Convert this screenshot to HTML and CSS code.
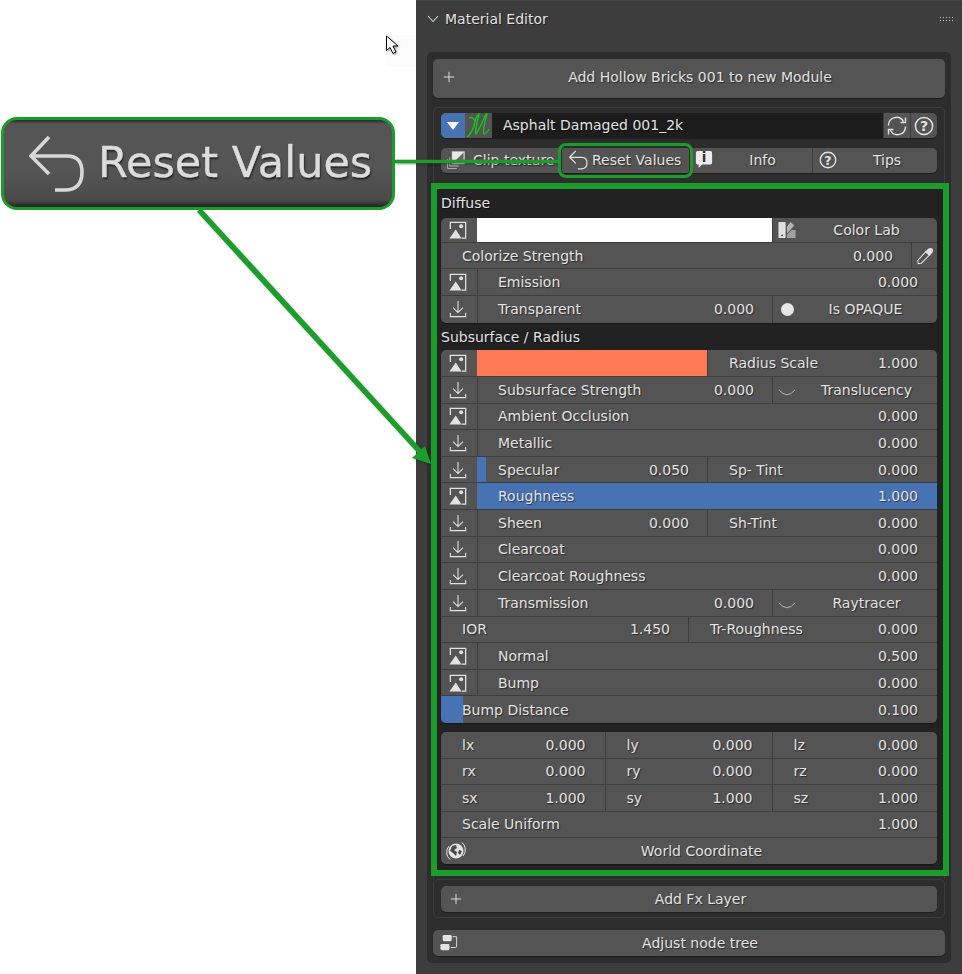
FILE: index.html
```html
<!DOCTYPE html>
<html lang="en">
<head>
    <meta charset="UTF-8">
    <meta name="viewport" content="width=device-width, initial-scale=1.0">
    <title>Material Editor</title>
    <link rel="stylesheet" href="styles.css">
</head>
<body>
    <svg class="defs" width="0" height="0">
        <symbol id="i-image" viewBox="0 0 20 20">
            <path d="M1.5 9V1.5H18.5V19H14" fill="none" stroke="currentColor" stroke-width="1.4"/>
            <path d="M0.5 19.5L7.5 9.5L14 19.5Z" fill="currentColor"/>
            <circle cx="13.5" cy="5.8" r="2.2" fill="currentColor"/>
        </symbol>
        <symbol id="i-import" viewBox="0 0 20 20">
            <path d="M10 1V14M4.5 8.5L10 14L15.5 8.5M1.5 14.5V18.5H18.5V14.5" fill="none" stroke="currentColor" stroke-width="1.2"/>
        </symbol>
        <symbol id="i-plus" viewBox="0 0 14 14">
            <path d="M7 1V13M1 7H13" fill="none" stroke="currentColor" stroke-width="1.1"/>
        </symbol>
        <symbol id="i-refresh" viewBox="0 0 20 20">
            <path d="M1.5 9.5A8 8 0 0 1 16.5 5.5M18.5 1.5V6.5H13.5M18.5 10.5A8 8 0 0 1 3.5 14.5M1.5 18.5V13.5H6.5" fill="none" stroke="currentColor" stroke-width="1.4"/>
        </symbol>
        <symbol id="i-clip" viewBox="0 0 20 20">
            <path d="M0.5 9V18Q0.5 19.5 2 19.5H11M3 7V16.5H13" fill="none" stroke="#a8a8a8" stroke-width="1.2"/>
            <rect x="6" y="1" width="13" height="13" fill="none" stroke="#d8d8d8" stroke-width="1.3"/>
            <path d="M6 14L19 1V14Z" fill="#d8d8d8" opacity="0.15"/>
            <path d="M6 1H19L6 14Z" fill="#e8e8e8"/>
        </symbol>
        <symbol id="i-swatch" viewBox="0 0 20 20">
            <rect x="0.5" y="1" width="8" height="18" rx="1" fill="#e0e0e0"/>
            <circle cx="4.5" cy="16" r="1" fill="#444"/>
            <path d="M10 6L14 1L18 5L10 14Z" fill="#b4b4b4"/>
            <path d="M10 19V15L15 10H19.5V19Z" fill="#a0a0a0"/>
        </symbol>
        <symbol id="i-dropper" viewBox="0 0 20 20">
            <path d="M11 5L15 9L6 18L2.5 18.5L2 15Z" fill="none" stroke="currentColor" stroke-width="1.2"/>
            <path d="M10 5.5L13.5 2Q16 0 18.5 2Q20 4 18 6.5L15 10Z" fill="currentColor"/>
        </symbol>
        <symbol id="i-curve" viewBox="0 0 20 10">
            <path d="M1 2Q10 13 19 2" fill="none" stroke="#b4b4b4" stroke-width="1.1"/>
        </symbol>
        <symbol id="i-globe" viewBox="0 0 20 20">
            <circle cx="10" cy="10" r="7.5" fill="#e4e4e4"/>
            <path d="M6 5L10 4L11 7L8 9L11 11L10 15L7 12L4 10Z" fill="#4a4a4a"/>
            <path d="M13 9L16 10L14 14L12 12Z" fill="#4a4a4a"/>
            <path d="M16 1.5A9.5 9.5 0 0 1 17 15M4 18.5A9.5 9.5 0 0 1 3 5" fill="none" stroke="#e4e4e4" stroke-width="1"/>
        </symbol>
        <symbol id="i-nodes" viewBox="0 0 20 20">
            <rect x="3" y="1" width="10" height="7" rx="1.5" fill="#e4e4e4"/>
            <rect x="0.5" y="11" width="10" height="7" rx="1.5" fill="#e4e4e4"/>
            <path d="M14 3H18.5V13.5Q18.5 15 17 15H12" fill="none" stroke="#e4e4e4" stroke-width="1"/>
        </symbol>
        <symbol id="i-undo" viewBox="0 0 56 58">
            <path d="M3 21H38Q53 21 53 37Q53 55 36 55H26M20 2L2 21L20 39" fill="none" stroke="currentColor" stroke-width="3.6"/>
        </symbol>
    </svg>

    <div class="blank">
        <div class="ghost"></div>
    </div>

    <div class="panel">
        <div class="panel-head">
            <svg class="chev" width="12" height="8" viewBox="0 0 12 8"><path d="M1 1L6 6.5L11 1" fill="none" stroke="#cfcfcf" stroke-width="1.1"/></svg>
            <span class="panel-title">Material Editor</span>
            <span class="grip"></span>
        </div>

        <div class="panel-body">
            <div class="btn add-btn">
                <svg class="ic14"><use href="#i-plus"/></svg>
                <span class="label">Add Hollow Bricks 001 to new Module</span>
            </div>

            <div class="module">
                <div class="group mat-row">
                    <div class="mat-arrow"><span class="tri"></span></div>
                    <div class="mat-logo">
                        <svg width="25" height="25" viewBox="0 0 25 25"><path d="M1 24Q6 21 9 9Q10 3 13 1Q11 9 10 15Q9 20 10 21Q14 15 19 3Q20 1 21 1Q19 8 18 14Q17 20 18 21Q20 21 23 16M9 9Q8 3 3 5" fill="none" stroke="#12c81a" stroke-width="1.4"/></svg>
                    </div>
                    <div class="mat-name">Asphalt Damaged 001_2k</div>
                    <div class="mat-tool"><svg class="ic20"><use href="#i-refresh"/></svg></div>
                    <div class="mat-tool">
                        <svg class="ic20" viewBox="0 0 20 20"><circle cx="10" cy="10" r="8.6" fill="none" stroke="currentColor" stroke-width="1.5"/><text x="10" y="15" class="glyph">?</text></svg>
                    </div>
                </div>

                <div class="group tool-row">
                    <div class="tool clip">
                        <svg class="ic18"><use href="#i-clip"/></svg>
                        <span class="clip-text">Clip texture</span>
                    </div>
                    <div class="tool reset">
                        <svg class="undo"><use href="#i-undo"/></svg>
                        <span>Reset Values</span>
                    </div>
                    <div class="tool info">
                        <svg class="ic18 tall" viewBox="0 0 20 22"><path d="M3 1H17Q19 1 19 3V14Q19 16 17 16H8L4 20V16H3Q1 16 1 14V3Q1 1 3 1Z" fill="#ececec"/><text x="10" y="13.5" class="glyph dark">i</text></svg>
                        <span class="label">Info</span>
                    </div>
                    <div class="tool tips">
                        <svg class="ic18" viewBox="0 0 20 20"><circle cx="10" cy="10" r="8.6" fill="none" stroke="currentColor" stroke-width="1.5"/><text x="10" y="15" class="glyph">?</text></svg>
                        <span class="label">Tips</span>
                    </div>
                </div>

                <div class="sheet">
                    <div class="sheet-label">Diffuse</div>
                    <div class="group">
                        <div class="row short">
                            <div class="cell ico"><svg class="ic18"><use href="#i-image"/></svg></div>
                            <div class="swatch w295 white"></div>
                            <div class="cell grow lead">
                                <svg class="ic18"><use href="#i-swatch"/></svg>
                                <span class="label">Color Lab</span>
                            </div>
                        </div>
                        <div class="row">
                            <div class="cell grow tight"><span>Colorize Strength</span><span>0.000</span></div>
                            <div class="cell ico w26"><svg class="ic18"><use href="#i-dropper"/></svg></div>
                        </div>
                        <div class="row">
                            <div class="cell ico"><svg class="ic18"><use href="#i-image"/></svg></div>
                            <div class="cell grow"><span>Emission</span><span>0.000</span></div>
                        </div>
                        <div class="row">
                            <div class="cell ico"><svg class="ic18"><use href="#i-import"/></svg></div>
                            <div class="cell w295"><span>Transparent</span><span>0.000</span></div>
                            <div class="cell grow lead">
                                <span class="dot"></span>
                                <span class="label">Is OPAQUE</span>
                            </div>
                        </div>
                    </div>

                    <div class="sheet-label next">Subsurface / Radius</div>
                    <div class="group">
                        <div class="row">
                            <div class="cell ico"><svg class="ic18"><use href="#i-image"/></svg></div>
                            <div class="swatch w230 coral"></div>
                            <div class="cell grow"><span>Radius Scale</span><span>1.000</span></div>
                        </div>
                        <div class="row">
                            <div class="cell ico"><svg class="ic18"><use href="#i-import"/></svg></div>
                            <div class="cell w295"><span>Subsurface Strength</span><span>0.000</span></div>
                            <div class="cell grow lead">
                                <svg class="curve"><use href="#i-curve"/></svg>
                                <span class="label">Translucency</span>
                            </div>
                        </div>
                        <div class="row">
                            <div class="cell ico"><svg class="ic18"><use href="#i-image"/></svg></div>
                            <div class="cell grow"><span>Ambient Occlusion</span><span>0.000</span></div>
                        </div>
                        <div class="row">
                            <div class="cell ico"><svg class="ic18"><use href="#i-import"/></svg></div>
                            <div class="cell grow"><span>Metallic</span><span>0.000</span></div>
                        </div>
                        <div class="row">
                            <div class="cell ico"><svg class="ic18"><use href="#i-import"/></svg></div>
                            <div class="cell w230">
                                <i class="fill" style="width: 9px"></i>
                                <span>Specular</span><span>0.050</span>
                            </div>
                            <div class="cell grow"><span>Sp- Tint</span><span>0.000</span></div>
                        </div>
                        <div class="row">
                            <div class="cell ico"><svg class="ic18"><use href="#i-image"/></svg></div>
                            <div class="cell grow active"><span>Roughness</span><span>1.000</span></div>
                        </div>
                        <div class="row">
                            <div class="cell ico"><svg class="ic18"><use href="#i-import"/></svg></div>
                            <div class="cell w230"><span>Sheen</span><span>0.000</span></div>
                            <div class="cell grow"><span>Sh-Tint</span><span>0.000</span></div>
                        </div>
                        <div class="row">
                            <div class="cell ico"><svg class="ic18"><use href="#i-import"/></svg></div>
                            <div class="cell grow"><span>Clearcoat</span><span>0.000</span></div>
                        </div>
                        <div class="row">
                            <div class="cell ico"><svg class="ic18"><use href="#i-import"/></svg></div>
                            <div class="cell grow"><span>Clearcoat Roughness</span><span>0.000</span></div>
                        </div>
                        <div class="row">
                            <div class="cell ico"><svg class="ic18"><use href="#i-import"/></svg></div>
                            <div class="cell w295"><span>Transmission</span><span>0.000</span></div>
                            <div class="cell grow lead">
                                <svg class="curve"><use href="#i-curve"/></svg>
                                <span class="label">Raytracer</span>
                            </div>
                        </div>
                        <div class="row">
                            <div class="cell w247"><span>IOR</span><span>1.450</span></div>
                            <div class="cell grow"><span>Tr-Roughness</span><span>0.000</span></div>
                        </div>
                        <div class="row">
                            <div class="cell ico"><svg class="ic18"><use href="#i-image"/></svg></div>
                            <div class="cell grow"><span>Normal</span><span>0.500</span></div>
                        </div>
                        <div class="row">
                            <div class="cell ico"><svg class="ic18"><use href="#i-image"/></svg></div>
                            <div class="cell grow"><span>Bump</span><span>0.000</span></div>
                        </div>
                        <div class="row">
                            <div class="cell grow">
                                <i class="fill" style="width: 22px"></i>
                                <span>Bump Distance</span><span>0.100</span>
                            </div>
                        </div>
                    </div>

                    <div class="group coords">
                        <div class="row">
                            <div class="cell third-a"><span>lx</span><span>0.000</span></div>
                            <div class="cell third-b"><span>ly</span><span>0.000</span></div>
                            <div class="cell grow"><span>lz</span><span>0.000</span></div>
                        </div>
                        <div class="row">
                            <div class="cell third-a"><span>rx</span><span>0.000</span></div>
                            <div class="cell third-b"><span>ry</span><span>0.000</span></div>
                            <div class="cell grow"><span>rz</span><span>0.000</span></div>
                        </div>
                        <div class="row">
                            <div class="cell third-a"><span>sx</span><span>1.000</span></div>
                            <div class="cell third-b"><span>sy</span><span>1.000</span></div>
                            <div class="cell grow"><span>sz</span><span>1.000</span></div>
                        </div>
                        <div class="row">
                            <div class="cell grow"><span>Scale Uniform</span><span>1.000</span></div>
                        </div>
                        <div class="row">
                            <div class="cell grow lead world">
                                <svg class="ic20"><use href="#i-globe"/></svg>
                                <span class="label">World Coordinate</span>
                            </div>
                        </div>
                    </div>
                </div>
            </div>

            <div class="fx-box">
                <div class="btn fx-btn">
                    <svg class="ic14"><use href="#i-plus"/></svg>
                    <span class="label">Add Fx Layer</span>
                </div>
            </div>

            <div class="btn node-btn">
                <svg class="ic18"><use href="#i-nodes"/></svg>
                <span class="label">Adjust node tree</span>
            </div>
        </div>
    </div>

    <!-- callouts drawn on top of the screenshot -->
    <svg class="marks" width="962" height="974" viewBox="0 0 962 974">
        <path d="M395 161.5H558" stroke="#1c9d2b" stroke-width="3.4" fill="none"/>
        <path d="M199 210L423 455" stroke="#1c9d2b" stroke-width="5.5" fill="none"/>
        <path d="M431 464L412 458L425 446Z" fill="#1c9d2b"/>
        <path d="M386.5 36V50.5L390 47.5L393 53.5L396 52L393 46H398Z" fill="#fff" stroke="#000" stroke-width="1"/>
    </svg>
    <div class="zoom-box">
        <svg class="zoom-undo"><use href="#i-undo"/></svg>
        <span class="zoom-text">Reset Values</span>
    </div>
    <div class="ring"></div>
    <div class="frame"></div>
</body>
</html>
```

FILE: styles.css
```css
body {
    margin: 0;
    width: 962px;
    height: 974px;
    overflow: hidden;
    display: flex;
    position: relative;
    background-color: #fff;
    font-family: "DejaVu Sans", sans-serif;
    font-size: 14px;
    color: #e2e2e2;
}
.defs {
    position: absolute;
}
.glyph {
    font-family: "DejaVu Sans", sans-serif;
    font-size: 14px;
    font-weight: bold;
    text-anchor: middle;
    fill: currentColor;
    text-shadow: none;
}
.glyph.dark {
    fill: #333;
    font-size: 15px;
}
.blank {
    width: 416px;
    flex: none;
    padding: 35px 0 0 386px;
    box-sizing: border-box;
}
.ghost {
    width: 30px;
    height: 32px;
    background-color: #fcfcfc;
}

/* panel */
.panel {
    width: 546px;
    flex: none;
    background-color: #3d3d3d;
    border-top: 1px solid #474747;
    box-sizing: border-box;
}
.panel-head {
    height: 51px;
    padding: 0 9px 15px 11px;
    box-sizing: border-box;
    display: flex;
    align-items: center;
    text-shadow: 1px 1px 1px rgba(0, 0, 0, .5);
}
.chev {
    margin-right: 6px;
}
.panel-title {
    flex: 1;
}
.grip {
    width: 14px;
    height: 6px;
    background-image: radial-gradient(circle, #c8c8c8 0.9px, transparent 1px);
    background-size: 3px 3px;
}
.panel-body {
    margin-left: 11px;
    width: 524px;
    height: 911px;
    padding: 7px 6px 0;
    box-sizing: border-box;
    background-color: #2d2d2d;
    border-radius: 5px;
}

/* buttons */
.btn {
    display: flex;
    align-items: center;
    background-color: #545454;
    border-radius: 5px;
    box-shadow: 0 1px 1px rgba(0, 0, 0, .35);
    text-shadow: 1px 1px 1px rgba(0, 0, 0, .5);
}
.label {
    flex: 1;
    text-align: center;
}
.add-btn {
    height: 39px;
    padding: 0 0 3px 10px;
    box-sizing: border-box;
}
.ic14 {
    width: 12px;
    height: 12px;
    flex: none;
}
.ic18 {
    width: 18px;
    height: 18px;
    flex: none;
}
.ic18.tall {
    height: 20px;
}
.ic20 {
    width: 20px;
    height: 20px;
    flex: none;
}

/* module box */
.module {
    margin-top: 9px;
    height: 772px;
    padding: 5px 0 0;
    box-sizing: border-box;
    border: 1px solid #3c3c3c;
    border-bottom: 0;
    border-radius: 5px 5px 0 0;
    overflow: hidden;
}
.group {
    margin: 0 7px;
    border-radius: 5px;
    overflow: hidden;
    background-color: #545454;
    box-shadow: 0 1px 1px rgba(0, 0, 0, .35);
    text-shadow: 1px 1px 1px rgba(0, 0, 0, .5);
}
.mat-row {
    height: 25px;
    display: flex;
}
.mat-arrow {
    width: 24px;
    background-color: #4772b3;
    display: flex;
    align-items: center;
    justify-content: center;
}
.tri {
    width: 0;
    height: 0;
    border-left: 6px solid transparent;
    border-right: 6px solid transparent;
    border-top: 8px solid #fff;
}
.mat-logo {
    width: 27px;
    display: flex;
    align-items: center;
    justify-content: center;
}
.mat-name {
    flex: 1;
    background-color: #1d1d1d;
    padding-left: 11px;
    line-height: 25px;
}
.mat-tool {
    width: 26px;
    display: flex;
    align-items: center;
    justify-content: center;
    border-left: 1px solid #3d3d3d;
}
.tool-row {
    margin-top: 10px;
    height: 25px;
    display: flex;
}
.tool {
    display: flex;
    align-items: center;
    box-sizing: border-box;
    padding-bottom: 1px;
}
.clip {
    width: 116px;
    padding-left: 6px;
}
.clip-text {
    margin-left: 8px;
    white-space: nowrap;
    overflow: hidden;
}
.reset {
    width: 136px;
    padding-left: 12px;
}
.undo {
    width: 19px;
    height: 20px;
    margin-right: 4px;
}
.info {
    width: 119px;
    padding-left: 2px;
}
.tips {
    flex: 1;
    padding-left: 6px;
    border-left: 1px solid #3d3d3d;
}

/* the framed part */
.sheet {
    margin-top: 10px;
    padding-bottom: 12px;
    background-color: #222;
}
.sheet-label {
    height: 34.8px;
    padding: 10px 0 0 7px;
    box-sizing: border-box;
    line-height: 20px;
    text-shadow: 1px 1px 1px rgba(0, 0, 0, .5);
}
.sheet-label.next {
    height: 27.6px;
    padding-top: 4px;
}
.row {
    height: 26.64px;
    display: flex;
    box-sizing: border-box;
    border-bottom: 1px solid #3d3d3d;
}
.row:last-child {
    border-bottom: 0;
}
.row.short {
    height: 25px;
}
.cell {
    position: relative;
    display: flex;
    align-items: center;
    justify-content: space-between;
    box-sizing: border-box;
    padding: 0 19px 0 21px;
    flex: none;
    border-left: 1px solid #3d3d3d;
}
.cell:first-child {
    border-left: 0;
}
.cell > span {
    position: relative;
}
.ico + .cell {
    padding-left: 20px;
}
.ico + .cell .fill {
    left: -1px;
}
.grow {
    flex: 1;
}
.tight,
.w230,
.w247,
.w295 {
    padding-right: 18px;
}
.ico {
    width: 36px;
    padding: 0 2px 0 0;
    justify-content: center;
}
.w26 {
    width: 26px;
    padding: 0;
}
.w230 {
    width: 230px;
}
.w247 {
    width: 247px;
}
.w295 {
    width: 295px;
}
.third-a {
    width: 163.5px;
}
.third-b {
    width: 167px;
}
.lead {
    padding: 0 0 0 5px;
    justify-content: flex-start;
}
.world {
    padding-left: 5px;
}
.swatch {
    flex: none;
    box-sizing: border-box;
    padding: 0;
}
.swatch.white {
    background-color: #fff;
}
.swatch.coral {
    background-color: #ff7b55;
}
.cell.active {
    background-color: #4772b3;
    border-left: 0;
    padding-left: 21px;
}
.fill {
    position: absolute;
    left: 0;
    top: 0;
    bottom: 0;
    background-color: #4772b3;
}
.dot {
    width: 13px;
    height: 13px;
    margin-left: 3px;
    border-radius: 50%;
    background-color: #e6e6e6;
}
.curve {
    width: 18px;
    height: 9px;
    flex: none;
    margin-top: 5px;
}
.coords {
    margin-top: 9.4px;
}
.coords .row {
    height: 26.4px;
}

/* lower buttons */
.fx-box {
    height: 39px;
    padding: 6px 7px 0;
    box-sizing: border-box;
    border: 1px solid #3c3c3c;
    border-radius: 5px;
}
.fx-btn {
    height: 26px;
    padding-left: 9px;
}
.fx-btn .label {
    padding-left: 2px;
}
.node-btn {
    height: 26px;
    margin-top: 12px;
    padding-left: 7px;
}
.node-btn .label {
    padding-right: 3px;
}

/* callouts */
.marks {
    position: absolute;
    left: 0;
    top: 0;
    filter: drop-shadow(1px 1px 1px rgba(0, 0, 0, .35));
}
.zoom-box {
    position: absolute;
    left: 1px;
    top: 117px;
    width: 394px;
    height: 93px;
    box-sizing: border-box;
    border: 3.5px solid #1c9d2b;
    border-radius: 16px;
    background: linear-gradient(#2a2a2a 0, #555 4px, #555 60%, #4a4a4a 92%, #222 100%);
    display: flex;
    align-items: center;
}
.zoom-undo {
    width: 56px;
    height: 58px;
    margin-left: 25px;
    color: #d8d8d8;
    filter: blur(.5px);
    flex: none;
}
.zoom-text {
    margin: 0 0 3px 13px;
    font-size: 43px;
    white-space: nowrap;
    color: #dcdcdc;
    filter: blur(.7px);
    -webkit-text-stroke: .4px #dcdcdc;
    text-shadow: 1px 2px 2px rgba(0, 0, 0, .6);
}
.ring {
    position: absolute;
    left: 558px;
    top: 143px;
    width: 135px;
    height: 35px;
    box-sizing: border-box;
    border: 3.5px solid #1c9d2b;
    border-radius: 8px;
    box-shadow: inset 0 0 0 1px #2b2b2b;
}
.frame {
    position: absolute;
    left: 431px;
    top: 183px;
    width: 518px;
    height: 693px;
    box-sizing: border-box;
    border: 6px solid #1c9d2b;
}
```
